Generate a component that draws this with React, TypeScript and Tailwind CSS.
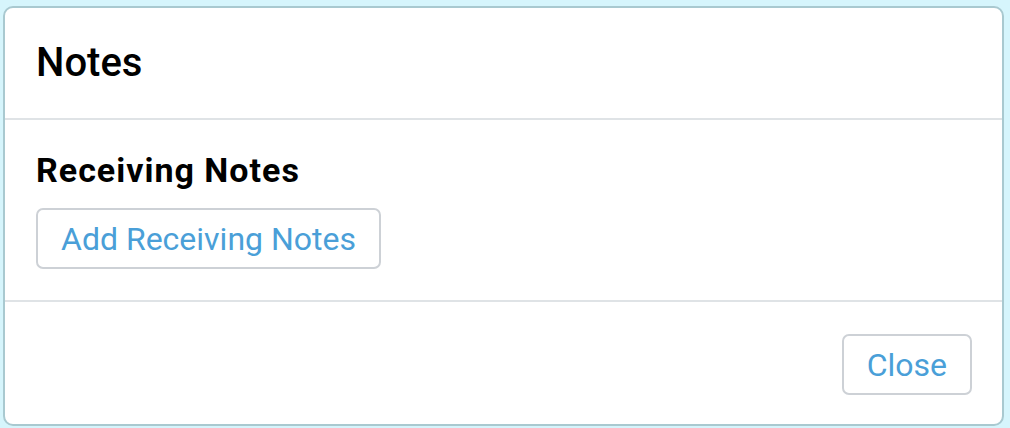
import React from 'react';

export default function App() {
  return (
    <div className="w-[1010px] h-[428px] bg-[#d6f5fc] pl-[3px] pr-[6px] pt-[6px] pb-[2px] font-['Roboto',sans-serif]">
      <div className="h-full flex flex-col bg-white border-2 border-[#a9c9d0] rounded-[10px] overflow-hidden">
        {/* Header */}
        <div className="h-[112px] shrink-0 flex items-center px-[31px] border-b-2 border-[#dfe3e6]">
          <h1 className="text-[40px] leading-none font-medium text-black">Notes</h1>
        </div>

        {/* Body */}
        <div className="pt-[30px] pb-[31px] px-[31px] border-b-2 border-[#dfe3e6]">
          <h2 className="text-[34px] leading-[40px] tracking-[1px] font-bold text-black">Receiving Notes</h2>
          <button className="mt-[18px] h-[61px] px-[23px] border-2 border-[#cdd1d6] rounded-[7px] text-[32px] text-[#4a9fd8] bg-white">
            Add Receiving Notes
          </button>
        </div>

        {/* Footer */}
        <div className="flex-1 flex justify-end items-start pt-[32px] pr-[30px]">
          <button className="h-[61px] px-[23px] border-2 border-[#cdd1d6] rounded-[7px] text-[32px] text-[#4a9fd8] bg-white">
            Close
          </button>
        </div>
      </div>
    </div>
  );
}
